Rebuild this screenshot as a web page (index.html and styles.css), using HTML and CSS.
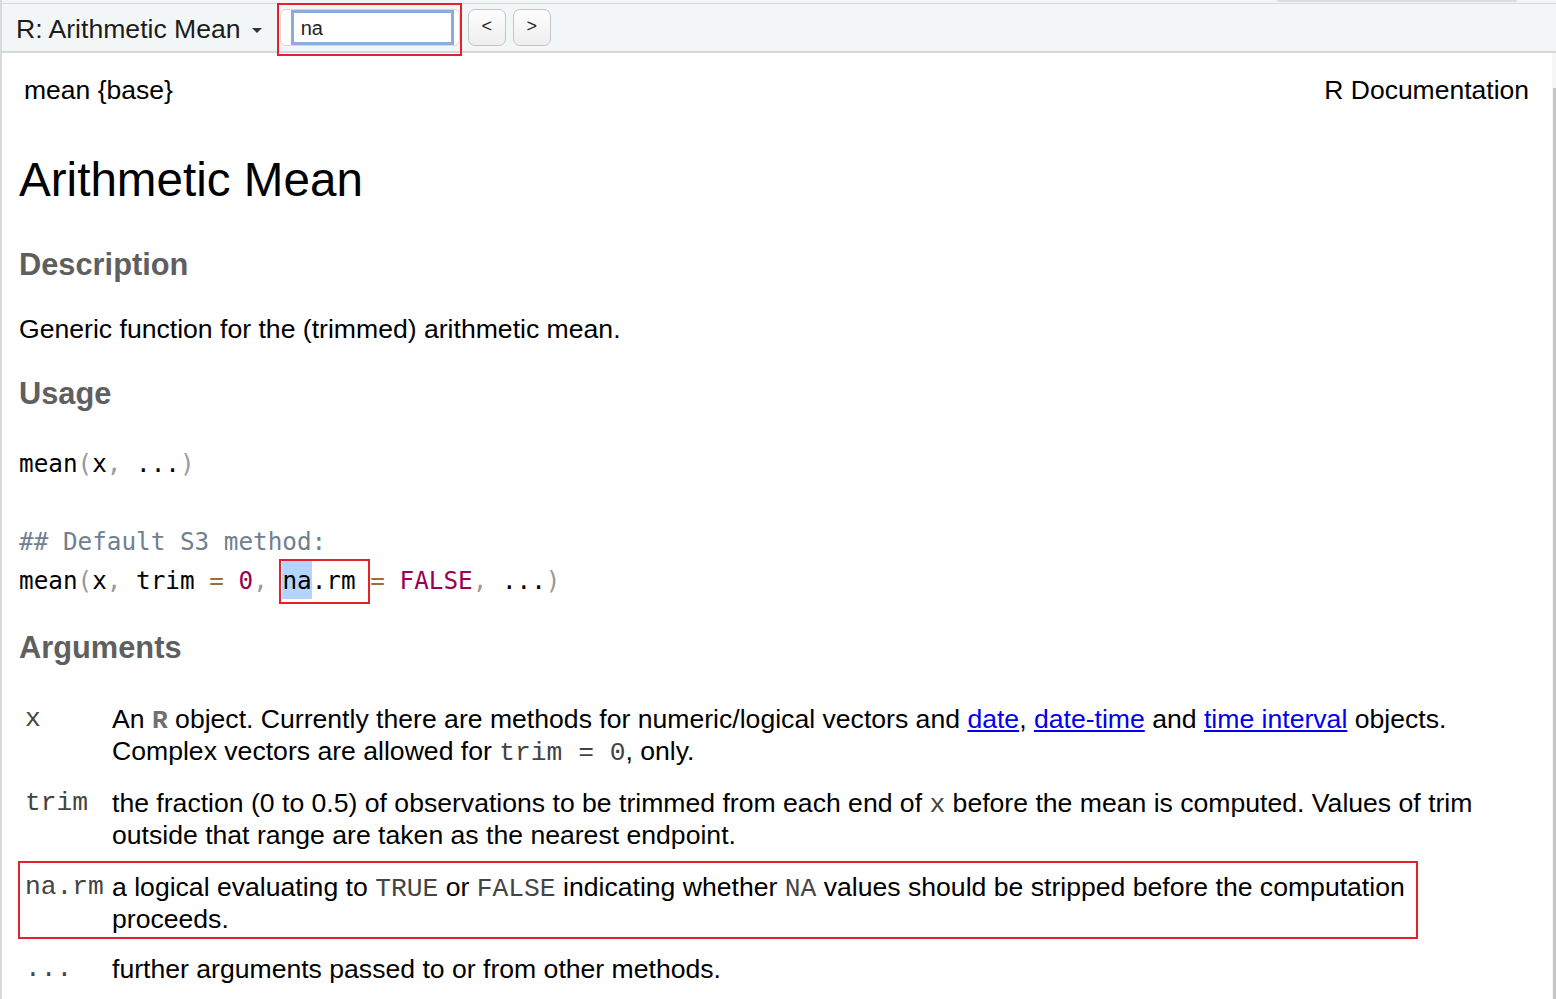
FILE: index.html
```html
<!DOCTYPE html>
<html>
<head>
<meta charset="utf-8">
<title>R: Arithmetic Mean</title>
<link rel="stylesheet" href="styles.css">
</head>
<body>
<div class="window">
  <div class="topstrip"><div class="tab"></div></div>
  <div class="toolbar">
    <span class="topic">R: Arithmetic Mean</span><span class="caret"></span>
    <div class="search-wrap">
      <div class="search"><div class="field">na</div></div>
      <div class="annot"></div>
    </div>
    <button class="nav">&lt;</button>
    <button class="nav">&gt;</button>
  </div>
  <div class="doc">
    <div class="doc-head"><span>mean {base}</span><span>R Documentation</span></div>
    <h1>Arithmetic Mean</h1>
    <h2 class="h-desc">Description</h2>
    <p class="lead">Generic function for the (trimmed) arithmetic mean.</p>
    <h2 class="h-usage">Usage</h2>
<pre class="code">mean<span class="p">(</span>x<span class="p">,</span> ...<span class="p">)</span>

<span class="c">## Default S3 method:</span>
mean<span class="p">(</span>x<span class="p">,</span> trim <span class="o">=</span> <span class="b">0</span><span class="p">,</span> <span class="mark"><span class="sel">na</span>.rm</span> <span class="o">=</span> <span class="b">FALSE</span><span class="p">,</span> ...<span class="p">)</span></pre>
    <h2 class="h-args">Arguments</h2>
    <div class="args">
      <div class="arg">
        <code class="name">x</code>
        <div class="desc">An <b class="pkg">R</b> object. Currently there are methods for numeric/logical vectors and <a href="#">date</a>, <a href="#">date-time</a> and <a href="#">time interval</a> objects. Complex vectors are allowed for <code>trim = 0</code>, only.</div>
      </div>
      <div class="arg">
        <code class="name">trim</code>
        <div class="desc">the fraction (0 to 0.5) of observations to be trimmed from each end of <code>x</code> before the mean is computed. Values of trim outside that range are taken as the nearest endpoint.</div>
      </div>
      <div class="arg hl">
        <code class="name">na.rm</code>
        <div class="desc">a logical evaluating to <code>TRUE</code> or <code>FALSE</code> indicating whether <code>NA</code> values should be stripped before the computation proceeds.</div>
      </div>
      <div class="arg after-hl">
        <code class="name">...</code>
        <div class="desc">further arguments passed to or from other methods.</div>
      </div>
    </div>
  </div>
  <div class="scroll"><div class="thumb"></div></div>
</div>
</body>
</html>
```
FILE: styles.css
```css
html, body {
  margin: 0;
  padding: 0;
  height: 999px;
  overflow: hidden;
  background: #ffffff;
}

body {
  font-family: "Liberation Sans", Arial, sans-serif;
  color: #000;
}

.window {
  position: relative;
  height: 999px;
  border-left: 2px solid #d6dadd;
  box-sizing: border-box;
}

.topstrip {
  height: 3px;
  background: #f3f4f5;
  border-bottom: 1px solid #d8dbde;
  display: flex;
  justify-content: flex-end;
}

.tab {
  width: 240px;
  height: 2px;
  margin-right: 39px;
  background: #dadde0;
  border-radius: 0 0 4px 4px;
}

.toolbar {
  height: 47px;
  background: #f3f6f7;
  border-bottom: 2px solid #d6d9dc;
  display: flex;
  align-items: center;
  padding-left: 14px;
}

.topic {
  font-size: 26.6px;
  line-height: 30px;
  color: #1c1c1c;
  padding-top: 2px;
}

.caret {
  width: 0;
  height: 0;
  margin-left: 11px;
  margin-top: 6px;
  border-left: 5px solid transparent;
  border-right: 5px solid transparent;
  border-top: 5px solid #333;
}

.search-wrap {
  position: relative;
  margin-left: 18px;
}

.search {
  width: 180px;
  height: 37px;
  box-sizing: border-box;
  border: 1px solid #d6d6d6;
  border-radius: 6px;
  background: #fff;
  display: flex;
  align-items: center;
}

.field {
  margin-left: 10px;
  width: 163px;
  height: 35px;
  box-sizing: border-box;
  border: 3px solid #8eabdc;
  background: #fff;
  font-size: 20px;
  line-height: 31px;
  padding-left: 7px;
  color: #222;
}

.annot {
  position: absolute;
  left: -3px;
  top: -6px;
  width: 185px;
  height: 53px;
  box-sizing: border-box;
  border: 2px solid #e3202b;
}

.nav {
  margin-left: 8px;
  width: 38px;
  height: 37px;
  padding: 0 0 2px 0;
  border: 1px solid #c4c4c4;
  border-radius: 7px;
  background: linear-gradient(#fefefe, #eeeeee);
  font-family: "Liberation Sans", Arial, sans-serif;
  font-size: 18px;
  color: #222;
}

.nav + .nav {
  margin-left: 7px;
}

.doc {
  padding: 21px 27px 0 17px;
}

.doc-head {
  display: flex;
  justify-content: space-between;
  font-size: 26.5px;
  line-height: 32px;
  padding-left: 5px;
}

h1 {
  margin: 46px 0 0 0;
  font-size: 47.6px;
  font-weight: normal;
  line-height: 56px;
}

h2 {
  margin: 0;
  font-size: 30.8px;
  font-weight: bold;
  line-height: 36px;
  color: #5f5f5f;
}

.h-desc { margin-top: 39px; }
.h-usage { margin-top: 31px; }
.h-args { margin-top: 30px; }

.lead {
  margin: 30px 0 0 0;
  font-size: 26.6px;
  line-height: 32px;
}

.code {
  margin: 32px 0 0 0;
  font-family: "DejaVu Sans Mono", monospace;
  font-size: 24.3px;
  line-height: 39px;
  color: #000;
}

.code .p { color: #999999; }
.code .o { color: #9a6e3a; }
.code .b { color: #990055; }
.code .c { color: #708090; }

.mark {
  position: relative;
}

.mark::after {
  content: "";
  position: absolute;
  left: -3px;
  right: -14px;
  top: -7px;
  bottom: -9px;
  border: 2px solid #e3202b;
}

.sel {
  background: #b3d4fc;
  padding: 5px 0 4px 0;
}

.args {
  margin-top: 27px;
  margin-left: -1px;
}

.arg {
  display: flex;
  align-items: flex-start;
  padding: 10px 0 10px 7px;
  font-size: 26.6px;
  line-height: 32px;
}

.arg .name {
  flex: 0 0 87px;
  font-family: "Liberation Mono", "Courier New", monospace;
  font-size: 26.3px;
  line-height: 32px;
  color: #444;
}

.arg .desc {
  flex: 1;
}

.arg.hl {
  width: 1400px;
  box-sizing: border-box;
  border: 2px solid #e3202b;
  padding: 8px 0 2px 5px;
}

.arg.after-hl {
  padding-top: 14px;
}

.desc code {
  font-family: "Liberation Mono", "Courier New", monospace;
  font-size: 26.3px;
  line-height: 1;
  color: #444;
}

.pkg {
  font-family: "Liberation Mono", "Courier New", monospace;
  font-size: 26.3px;
  line-height: 1;
  color: #707070;
}

.desc a {
  color: #0000ee;
  text-decoration: underline;
}

.scroll {
  position: absolute;
  right: 0;
  top: 53px;
  bottom: 0;
  width: 4px;
  background: #f6f6f6;
}

.thumb {
  position: absolute;
  right: 0;
  top: 35px;
  bottom: 0;
  width: 3px;
  background: #c6c6c6;
}
```
